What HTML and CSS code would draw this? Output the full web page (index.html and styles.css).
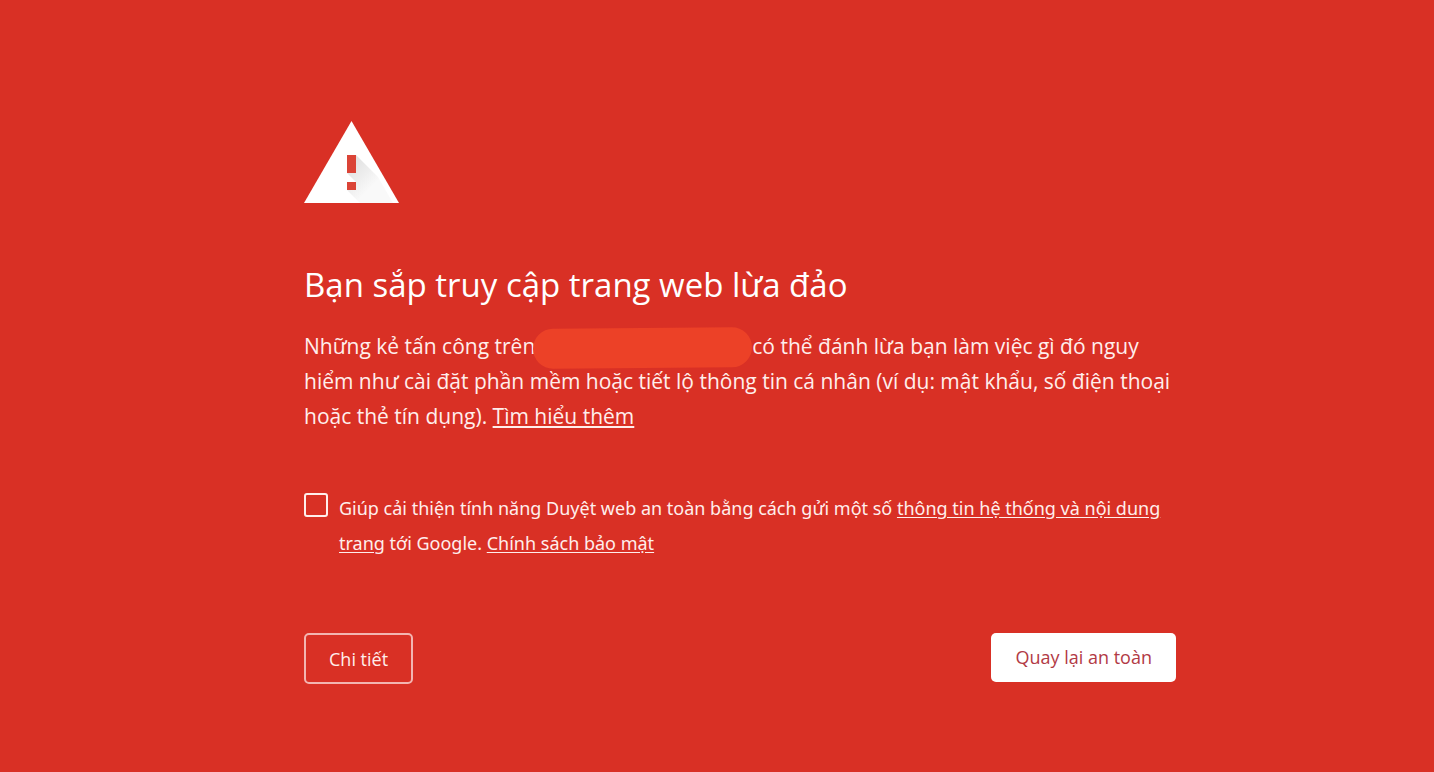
FILE: index.html
```html
<!DOCTYPE html>
<html lang="vi">

<head>
  <meta charset="utf-8">
  <meta name="viewport" content="width=device-width, initial-scale=1">
  <title>Lỗi bảo mật</title>
  <link rel="stylesheet" href="styles.css">
</head>

<body>
  <main class="interstitial">
    <svg class="icon" viewBox="0 0 95 82" aria-hidden="true">
      <defs>
        <linearGradient id="shade" gradientUnits="userSpaceOnUse" x1="48" y1="42" x2="70" y2="64">
          <stop offset="0" stop-color="#e2e2e2" />
          <stop offset="1" stop-color="#f9f9f9" />
        </linearGradient>
      </defs>
      <path fill="#fff" d="M47.500 0 95 82H0z" />
      <path fill="url(#shade)" d="M52 34 74 56 89 82H56L43 69H52V61L43 52H52z" />
      <path fill="#db4437" d="M43 34h9v18h-9zM43 61h9v8h-9z" />
    </svg>

    <h1>Bạn sắp truy cập trang web lừa đảo</h1>
    <p class="warning">Những kẻ tấn công trên<span class="hidden-site"></span>có thể đánh lừa bạn làm việc gì đó nguy hiểm như cài đặt phần mềm hoặc tiết lộ thông tin cá nhân (ví dụ: mật khẩu, số điện thoại hoặc thẻ tín dụng). <a href="#">Tìm hiểu thêm</a></p>

    <div class="opt-in">
      <input type="checkbox" id="report">
      <label for="report">Giúp cải thiện tính năng Duyệt web an toàn bằng cách gửi một số <a href="#">thông tin hệ thống và nội dung trang</a> tới Google. <a href="#">Chính sách bảo mật</a></label>
    </div>

    <div class="buttons">
      <button type="button" class="details">Chi tiết</button>
      <button type="button" class="back">Quay lại an toàn</button>
    </div>
  </main>
</body>

</html>
```
FILE: styles.css
```css
* {
  box-sizing: border-box;
}

body {
  background: #d93025;
  color: #ffeeec;
  font: 21px/35px "Segoe UI", "Open Sans", "Noto Sans", sans-serif;
  margin: 0;
  padding: 121px 24px 48px 70px;
}

.interstitial {
  margin: 0 auto;
  max-width: 872px;
}

.icon {
  display: block;
  width: 95px;
}

h1 {
  color: #fff;
  font-size: 33px;
  font-weight: 400;
  line-height: 44px;
  margin: 60px 0 22px;
}

p {
  margin: 0;
}

a {
  color: inherit;
  text-underline-offset: 2px;
}

.hidden-site {
  background: #ec4127;
  border-radius: 20px;
  display: inline-block;
  height: 40px;
  margin: -8px 0 -8px -2px;
  transform: rotate(-0.5deg);
  vertical-align: middle;
  width: 219px;
}

.opt-in {
  display: flex;
  font-family: "Segoe UI", "Noto Sans", sans-serif;
  font-size: 18px;
  gap: 11px;
  margin-top: 57px;
}

.opt-in input {
  appearance: none;
  border: 2px solid #ffeeec;
  border-radius: 3px;
  flex: none;
  height: 24px;
  margin: 2px 0 0;
  width: 24px;
}

.opt-in input:checked {
  background: #ffeeec;
}

.buttons {
  align-items: flex-start;
  display: flex;
  justify-content: space-between;
  margin-top: 72px;
}

button {
  border: 0;
  border-radius: 5px;
  cursor: pointer;
  font: inherit;
  font-size: 18px;
  line-height: 25px;
  padding: 12px 24px;
}

.details {
  background: none;
  border: 2px solid #f3b5b1;
  color: #ffeeec;
  padding: 12px 23px 10px;
}

.back {
  background: #fff;
  color: #b23a45;
}
```
